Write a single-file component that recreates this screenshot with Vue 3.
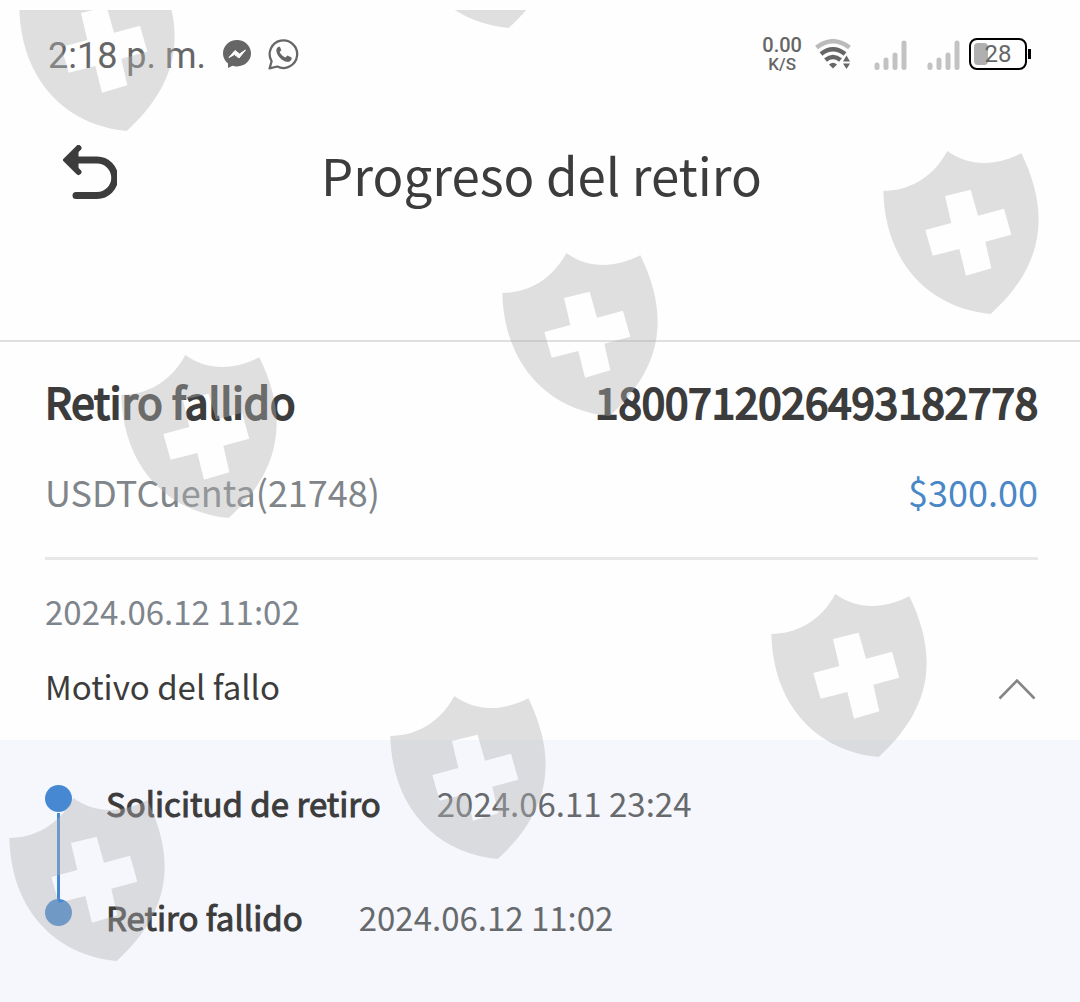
<template>
  <div class="page">
    <!-- Status bar -->
    <div class="status-bar">
      <div class="status-left">
        <span class="clock">2:18 p. m.</span>
        <svg class="app-icon" viewBox="0 0 28 28">
          <path d="M14 0C6 0 0 6 0 13.4c0 4 1.900 7.600 5 10V28l4.500-2.200c1.400.4 3 .6 4.500.6 8 0 14-5.800 14-13.100S22 0 14 0z" fill="#666" />
          <path d="M6 17.500l6-7 4.500 3.500 6-4-6.500 8-4.500-3.500z" fill="#fff" stroke="#fff" stroke-width="1" stroke-linejoin="round" />
        </svg>
        <svg class="app-icon wide" viewBox="0 0 30 30">
          <path d="M1.500 28.500l2-7A13.300 13.300 0 1 1 9 26.600z" fill="none" stroke="#666" stroke-width="2.200" stroke-linejoin="round" />
          <path d="M10.600 7.500c-1.600.5-2.800 2.200-2.500 4 .7 5 5.500 9.800 10.400 10.600 2 .3 4-1 4.400-3l-.1-1.200-4-2-1.900 2c-2.600-1-4.600-3-5.600-5.400l1.600-1.700-1.400-3.300z" fill="#666" />
        </svg>
      </div>
      <div class="status-right">
        <div class="speed">
          <span class="speed-value">0.00</span>
          <span class="speed-unit">K/S</span>
        </div>
        <svg class="wifi" viewBox="0 0 36 30">
          <g fill="none" stroke-width="4.500">
            <path d="M1.500 8.500Q18-4 34.500 8.500" stroke="#bbb" />
            <path d="M6 15Q18 5.500 30 15" stroke="#666" />
            <path d="M10.500 21Q18 15 25.500 21" stroke="#666" />
          </g>
          <path d="M14 25.500q4-3.500 8 0l-4 4zM31.500 16.500l3.500 6h-7zM31.500 30l3.500-5.500h-7z" fill="#666" />
        </svg>
        <svg v-for="n in 2" :key="n" class="signal" viewBox="0 0 32 30">
          <path d="M2.500 25v2.500M11.500 20v7.500M20.500 15v12.500M29.500 3v24.500" stroke="#c2c2c2" stroke-width="5" stroke-linecap="round" />
        </svg>
        <div class="battery">
          <span class="battery-level" :style="{ width: battery / 2 + 'px' }"></span>
          <span class="battery-text">{{ battery }}</span>
        </div>
      </div>
    </div>

    <!-- Header -->
    <header class="header">
      <button class="btn-back" aria-label="Volver">
        <svg viewBox="0 0 54 54">
          <path d="M10 15H34a17.500 17.500 0 0 1 0 35.500H13" fill="none" stroke="#3c3c3c" stroke-width="7" stroke-linecap="round" />
          <path d="M15.500 3L3.500 15l12 12" fill="#3c3c3c" stroke="#3c3c3c" stroke-width="6" stroke-linecap="round" stroke-linejoin="miter" />
        </svg>
      </button>
      <h1 class="title">Progreso del retiro</h1>
    </header>

    <main class="content">
      <section class="summary">
        <div class="row">
          <h2 class="heading">Retiro fallido</h2>
          <span class="heading">1800712026493182778</span>
        </div>
        <div class="row account">
          <span>USDTCuenta(21748)</span>
          <span class="amount">$300.00</span>
        </div>
      </section>

      <section class="reason">
        <time class="date">2024.06.12 11:02</time>
        <button class="btn-toggle" :aria-expanded="open" @click="open = !open">
          <span>Motivo del fallo</span>
          <svg class="chevron" :class="{ closed: !open }" viewBox="0 0 38 22">
            <path d="M1.500 20.500L19 2.500l17.500 18" fill="none" stroke="#858585" stroke-width="2.600" />
          </svg>
        </button>
      </section>

      <ol v-if="open" class="timeline">
        <li v-for="step in steps" :key="step.label" class="step">
          <span class="dot"></span>
          <strong class="step-label">{{ step.label }}</strong>
          <time class="step-date">{{ step.date }}</time>
        </li>
      </ol>
    </main>

    <!-- Watermark -->
    <div class="watermark" aria-hidden="true">
      <svg
        v-for="(mark, i) in marks"
        :key="i"
        class="shield"
        viewBox="69 63 468 489"
        :style="{ left: mark.x + 'px', top: mark.y + 'px' }"
      >
        <path
          fill-rule="evenodd"
          d="M70 183C140 182 215 150 262 63C325 109 405 110 484 70C567 240 560 400 392 552C210 535 75 400 70 183zM255 198L332 179L354 257L432 236L454 314L376 335L394 415L318 437L298 357L218 377L196 300L274 279z"
        />
      </svg>
    </div>
  </div>
</template>

<script setup>
import { ref } from 'vue'

const open = ref(true)
const battery = ref(28)

const steps = [
  { label: 'Solicitud de retiro', date: '2024.06.11 23:24' },
  { label: 'Retiro fallido', date: '2024.06.12 11:02' }
]

// Top is counted from the edge of the watermark layer
const marks = [
  { x: 19, y: -42 },
  { x: 401, y: -145 },
  { x: 883, y: 141 },
  { x: 502, y: 243 },
  { x: 121, y: 345 },
  { x: 771, y: 584 },
  { x: 390, y: 686 },
  { x: 9, y: 788 }
]
</script>

<style>
body {
  margin: 0;
  background: #fefefe;
}
</style>

<style scoped>
.page {
  position: relative;
  min-height: 100vh;
  display: flex;
  flex-direction: column;
  overflow: hidden;
  color: #3c3c3c;
  font-family: "Noto Sans CJK SC", "Noto Sans", sans-serif;
}

button {
  padding: 0;
  border: none;
  background: none;
  color: inherit;
  font: inherit;
  cursor: pointer;
}

h1,
h2 {
  margin: 0;
  font-weight: 400;
}

.status-bar {
  display: flex;
  justify-content: space-between;
  align-items: center;
  height: 108px;
  padding: 0 53px 0 48px;
  color: #666;
  font-family: Roboto, sans-serif;
}

.status-left,
.status-right {
  display: flex;
  align-items: center;
}

.status-left {
  gap: 17px;
}

.clock {
  padding-top: 4px;
  font-size: 36px;
  line-height: 48px;
}

.app-icon {
  width: 28px;
  height: 28px;
}

.app-icon.wide {
  width: 31px;
  height: 31px;
}

.speed {
  display: flex;
  flex-direction: column;
  align-items: center;
  margin-right: 13px;
  font-weight: 500;
}

.speed-value {
  font-size: 20px;
  line-height: 20px;
}

.speed-unit {
  font-size: 17px;
  line-height: 18px;
}

.wifi {
  width: 36px;
  height: 30px;
  margin-right: 23px;
}

.signal {
  width: 33px;
  height: 30px;
  margin-top: 2px;
  margin-right: 20px;
}

.signal + .signal {
  margin-right: 9px;
}

.battery {
  position: relative;
  display: flex;
  align-items: center;
  justify-content: center;
  box-sizing: border-box;
  width: 58px;
  height: 32px;
  border: 2px solid #000;
  border-radius: 8px;
}

.battery::after {
  content: '';
  position: absolute;
  left: 57px;
  width: 3px;
  height: 10px;
  background: #000;
}

.battery-level {
  position: absolute;
  left: 3px;
  top: 3px;
  bottom: 3px;
  border-radius: 4px;
  background: #b0b0b0;
}

.battery-text {
  position: relative;
  font-size: 24px;
  line-height: 28px;
}

.header {
  display: grid;
  grid-template-columns: 54px 1fr 54px;
  align-items: center;
  padding: 32px 60px 132px 63px;
  border-bottom: 2px solid #dfdfdf;
}

.btn-back svg {
  display: block;
  width: 54px;
  height: 54px;
  margin-bottom: 4px;
}

.title {
  font-size: 51px;
  line-height: 68px;
  text-align: center;
}

.content {
  flex: 1;
  display: flex;
  flex-direction: column;
}

.summary {
  margin: 0 42px 0 45px;
  padding: 29px 0 38px;
  border-bottom: 3px solid #e8e8e8;
}

.row {
  display: flex;
  justify-content: space-between;
}

.heading {
  font-size: 42px;
  line-height: 60px;
  -webkit-text-stroke: 2px currentColor;
}

.account {
  margin-top: 32px;
  color: #7f8589;
  font-size: 36px;
  line-height: 56px;
}

.amount {
  color: #4a87c7;
}

.reason {
  padding: 27px 44px 30px 45px;
  font-size: 33px;
  line-height: 48px;
}

.date {
  display: block;
  color: #7f858d;
}

.btn-toggle {
  display: flex;
  justify-content: space-between;
  align-items: center;
  width: 100%;
  margin-top: 27px;
}

.chevron {
  width: 38px;
  height: 22px;
  margin-top: 6px;
}

.chevron.closed {
  transform: rotate(180deg);
}

.timeline {
  flex: 1;
  display: flex;
  flex-direction: column;
  gap: 66px;
  margin: 0;
  padding: 39px 45px;
  list-style: none;
  background: #f6f7fc;
  font-size: 33px;
  line-height: 48px;
}

.step {
  position: relative;
  display: flex;
}

.dot {
  width: 27px;
  height: 27px;
  margin-top: 6px;
  margin-right: 34px;
  border-radius: 50%;
  background: #4689d2;
}

/* Line up to the previous dot */
.step + .step::before {
  content: '';
  position: absolute;
  left: 12px;
  bottom: 28px;
  width: 3px;
  height: 100px;
  background: #4689d2;
}

.step-label {
  margin-right: 56px;
  font-weight: 400;
  -webkit-text-stroke: 1px currentColor;
}

.step-date {
  color: #666a6d;
}

.watermark {
  position: absolute;
  inset: 10px 0 0;
  overflow: hidden;
  pointer-events: none;
}

.shield {
  position: absolute;
  width: 156px;
  height: 163px;
  fill: #b2b2b2;
  opacity: 0.4;
}
</style>
